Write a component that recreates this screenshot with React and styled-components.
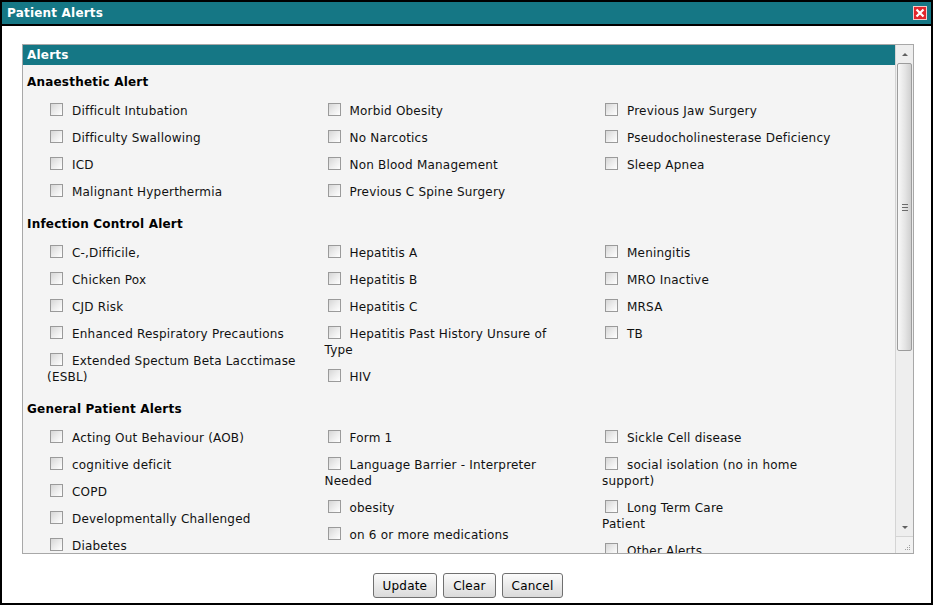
import React from "react";
import styled, { createGlobalStyle } from "styled-components";

const GlobalStyle = createGlobalStyle`
  html, body {
    margin: 0;
    padding: 0;
    background: #ffffff;
  }
  body {
    font-family: "DejaVu Sans", Verdana, sans-serif;
    font-size: 12px;
    letter-spacing: 0.2px;
    color: #000;
  }
`;

const TEAL = "#157785";

const sections = [
  {
    title: "Anaesthetic Alert",
    columns: [
      ["Difficult Intubation", "Difficulty Swallowing", "ICD", "Malignant Hyperthermia"],
      ["Morbid Obesity", "No Narcotics", "Non Blood Management", "Previous C Spine Surgery"],
      ["Previous Jaw Surgery", "Pseudocholinesterase Deficiency", "Sleep Apnea"],
    ],
  },
  {
    title: "Infection Control Alert",
    columns: [
      [
        "C-,Difficile,",
        "Chicken Pox",
        "CJD Risk",
        "Enhanced Respiratory Precautions",
        "Extended Spectum Beta Lacctimase\n(ESBL)",
      ],
      ["Hepatitis A", "Hepatitis B", "Hepatitis C", "Hepatitis Past History Unsure of\nType", "HIV"],
      ["Meningitis", "MRO Inactive", "MRSA", "TB"],
    ],
  },
  {
    title: "General Patient Alerts",
    columns: [
      ["Acting Out Behaviour (AOB)", "cognitive deficit", "COPD", "Developmentally Challenged", "Diabetes"],
      ["Form 1", "Language Barrier - Interpreter\nNeeded", "obesity", "on 6 or more medications", "Pregnant"],
      ["Sickle Cell disease", "social isolation (no in home\nsupport)", "Long Term Care\nPatient", "Other Alerts"],
    ],
  },
];

// window frame
const Window = styled.div`
  box-sizing: border-box;
  width: 933px;
  height: 605px;
  border: 2px solid #000;
  display: flex;
  flex-direction: column;
  background: #fff;
`;

const TitleBar = styled.div`
  height: 22px;
  border-bottom: 2px solid #000;
  background: ${TEAL};
  display: flex;
  align-items: center;
  justify-content: space-between;
  padding: 0 4px 0 5px;
`;

const Title = styled.span`
  color: #fff;
  font-weight: bold;
  font-size: 12px;
  line-height: 16px;
`;

const CloseButton = styled.button`
  width: 14px;
  height: 14px;
  padding: 0;
  border: 0;
  background: none;
  display: flex;
  cursor: pointer;
`;

const Body = styled.div`
  flex: 1;
  padding: 18px 17px 0 20px;
  display: flex;
  flex-direction: column;
`;

const Panel = styled.div`
  box-sizing: border-box;
  height: 510px;
  border: 1px solid #a8a8a8;
  display: flex;
  background: #f4f4f4;
  overflow: hidden;
`;

const Content = styled.div`
  flex: 1;
  overflow: hidden;
`;

const PanelHeader = styled.div`
  height: 20px;
  background: ${TEAL};
  color: #fff;
  font-weight: bold;
  line-height: 20px;
  padding-left: 4px;
`;

const Section = styled.div`
  & + & {
    margin-top: 2px;
  }
`;

const SectionTitle = styled.div`
  font-weight: bold;
  line-height: 16px;
  padding: 9px 4px 7px;
`;

const Columns = styled.div`
  display: grid;
  grid-template-columns: repeat(3, 277.5px);
  padding-left: 24px;
  align-items: start;
`;

const Column = styled.div`
  display: flex;
  flex-direction: column;
`;

const Item = styled.label`
  display: block;
  line-height: 16px;
  padding: 6px 0 5px;
  white-space: pre-line;
  color: #111;
`;

const Box = styled.span`
  display: inline-block;
  box-sizing: border-box;
  width: 13px;
  height: 13px;
  margin: 0 9px 0 3px;
  vertical-align: -1px;
  border: 1px solid #9a9a9a;
  background: linear-gradient(135deg, #d6d6d6 0%, #ececec 50%, #ffffff 100%);
`;

// scrollbar pieces
const ScrollBar = styled.div`
  width: 17px;
  border-left: 1px solid #d4d4d4;
  background: #eeeeee;
  display: flex;
  flex-direction: column;
`;

const ArrowButton = styled.div`
  height: ${(p) => p.$h}px;
  display: flex;
  align-items: center;
  justify-content: center;
  &::after {
    content: "";
    border-left: 3px solid transparent;
    border-right: 3px solid transparent;
    ${(p) => (p.$down ? "border-top: 3px solid #606060;" : "border-bottom: 3px solid #606060;")}
  }
`;

const Thumb = styled.div`
  box-sizing: border-box;
  margin: 0 1px;
  height: 288px;
  border: 1px solid #9c9c9c;
  border-radius: 2px;
  background: linear-gradient(90deg, #f8f8f8 0%, #e4e4e4 55%, #cfcfcf 100%);
  display: flex;
  align-items: center;
  justify-content: center;
`;

const Grip = styled.div`
  width: 6px;
  height: 7px;
  background: repeating-linear-gradient(#6b6b6b 0 1px, transparent 1px 3px);
`;

const Track = styled.div`
  flex: 1;
`;

const Corner = styled.div`
  height: 17px;
  border-top: 1px solid #d4d4d4;
  background: #f2f2f2;
  display: flex;
  align-items: flex-end;
  justify-content: flex-end;
  padding: 0 2px 2px 0;
  box-sizing: border-box;
`;

const Footer = styled.div`
  display: flex;
  justify-content: center;
  gap: 6px;
  padding-top: 19px;
`;

const Button = styled.button`
  height: 25px;
  padding: 0 9px;
  font-family: "DejaVu Sans", Verdana, sans-serif;
  font-size: 12px;
  letter-spacing: 0.2px;
  color: #000;
  border: 1px solid #707070;
  border-radius: 3px;
  background: linear-gradient(#fbfbfb 0%, #eaeaea 50%, #dadada 100%);
  cursor: pointer;
`;

const CloseIcon = () => (
  <svg width="14" height="14" viewBox="0 0 14 14">
    <rect x="0.5" y="0.5" width="13" height="13" fill="#e0262b" stroke="#f4c9c9" />
    <path d="M3.5 3.5 L10.5 10.5 M10.5 3.5 L3.5 10.5" stroke="#fff" strokeWidth="2.2" />
  </svg>
);

const ResizeGrip = () => (
  <svg width="8" height="8" viewBox="0 0 8 8">
    {[
      [6, 1],
      [4, 3],
      [6, 3],
      [2, 5],
      [4, 5],
      [6, 5],
    ].map(([x, y]) => (
      <rect key={`${x}-${y}`} x={x} y={y + 1} width="1" height="1" fill="#a0a0a0" />
    ))}
  </svg>
);

export default function App() {
  return (
    <>
      <GlobalStyle />
      <Window>
        <TitleBar>
          <Title>Patient Alerts</Title>
          <CloseButton aria-label="Close">
            <CloseIcon />
          </CloseButton>
        </TitleBar>
        <Body>
          <Panel>
            <Content>
              <PanelHeader>Alerts</PanelHeader>
              {sections.map((section) => (
                <Section key={section.title}>
                  <SectionTitle>{section.title}</SectionTitle>
                  <Columns>
                    {section.columns.map((col, i) => (
                      <Column key={i}>
                        {col.map((label) => (
                          <Item key={label}>
                            <Box />
                            {label}
                          </Item>
                        ))}
                      </Column>
                    ))}
                  </Columns>
                </Section>
              ))}
            </Content>
            <ScrollBar>
              <ArrowButton $h={18} />
              <Thumb>
                <Grip />
              </Thumb>
              <Track />
              <ArrowButton $h={17} $down />
              <Corner>
                <ResizeGrip />
              </Corner>
            </ScrollBar>
          </Panel>
          <Footer>
            <Button>Update</Button>
            <Button>Clear</Button>
            <Button>Cancel</Button>
          </Footer>
        </Body>
      </Window>
    </>
  );
}
